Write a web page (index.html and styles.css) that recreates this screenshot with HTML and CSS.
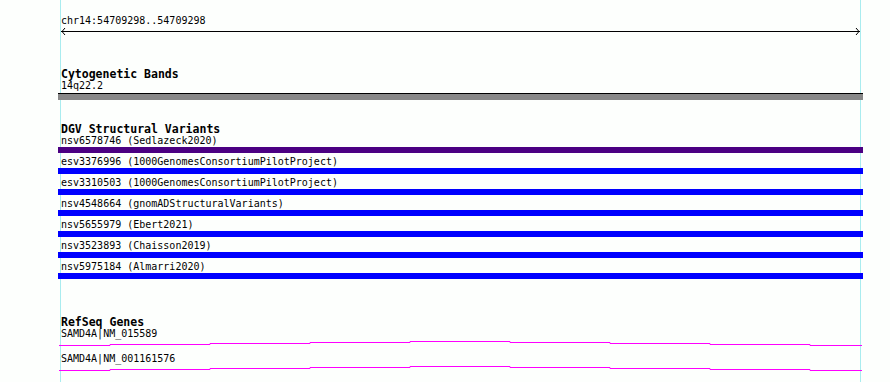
FILE: index.html
```html
<!DOCTYPE html>
<html lang="en">
  <head>
    <meta charset="UTF-8" />
    <meta name="viewport" content="width=device-width, initial-scale=1.0" />
    <title>Track view</title>
    <link rel="stylesheet" href="styles.css">
  </head>
  <body>
    <div class="l-view">
      <div class="c-ruler">
        <div class="c-label">chr14:54709298..54709298</div>
        <svg class="c-ruler__arrow" width="799" height="9" viewBox="0 0 799 9">
          <line x1="0" y1="4.5" x2="799" y2="4.5" stroke="#000" stroke-width="1" />
          <polyline points="4,1 1,4.5 4,8" fill="none" stroke="#000" stroke-width="1" />
          <polyline points="795,1 798,4.5 795,8" fill="none" stroke="#000" stroke-width="1" />
        </svg>
      </div>

      <div class="c-track c-track--cyto">
        <h3 class="c-track__title">Cytogenetic Bands</h3>
        <div class="c-label">14q22.2</div>
        <div class="c-band"></div>
      </div>

      <div class="c-track c-track--dgv">
        <h3 class="c-track__title">DGV Structural Variants</h3>
        <div class="c-sv">
          <div class="c-label">nsv6578746 (Sedlazeck2020)</div>
          <div class="c-sv__bar c-sv__bar--loss"></div>
        </div>
        <div class="c-sv">
          <div class="c-label">esv3376996 (1000GenomesConsortiumPilotProject)</div>
          <div class="c-sv__bar"></div>
        </div>
        <div class="c-sv">
          <div class="c-label">esv3310503 (1000GenomesConsortiumPilotProject)</div>
          <div class="c-sv__bar"></div>
        </div>
        <div class="c-sv">
          <div class="c-label">nsv4548664 (gnomADStructuralVariants)</div>
          <div class="c-sv__bar"></div>
        </div>
        <div class="c-sv">
          <div class="c-label">nsv5655979 (Ebert2021)</div>
          <div class="c-sv__bar"></div>
        </div>
        <div class="c-sv">
          <div class="c-label">nsv3523893 (Chaisson2019)</div>
          <div class="c-sv__bar"></div>
        </div>
        <div class="c-sv">
          <div class="c-label">nsv5975184 (Almarri2020)</div>
          <div class="c-sv__bar"></div>
        </div>
      </div>

      <div class="c-track c-track--genes">
        <h3 class="c-track__title">RefSeq Genes</h3>
        <div class="c-gene">
          <div class="c-label">SAMD4A|NM_015589</div>
          <svg class="c-gene__line" width="803" height="13" viewBox="0 0 803 13">
            <polyline points="0,5.5 51,5.5 51,4.5 151,4.5 151,3.5 251,3.5 251,2.5 351,2.5 351,1.5 451,1.5 451,2.5 551,2.5 551,3.5 651,3.5 651,4.5 751,4.5 751,5.5 803,5.5" fill="none" stroke="#f0f" stroke-width="1" />
          </svg>
        </div>
        <div class="c-gene">
          <div class="c-label">SAMD4A|NM_001161576</div>
          <svg class="c-gene__line" width="803" height="13" viewBox="0 0 803 13">
            <polyline points="0,5.5 51,5.5 51,4.5 151,4.5 151,3.5 251,3.5 251,2.5 351,2.5 351,1.5 451,1.5 451,2.5 551,2.5 551,3.5 651,3.5 651,4.5 751,4.5 751,5.5 803,5.5" fill="none" stroke="#f0f" stroke-width="1" />
          </svg>
        </div>
      </div>
    </div>
  </body>
</html>
```

FILE: styles.css
```css
:root {
  --bg: #fdfffd;
  --guide: #a9ecef;
  --ink: #000000;
  --band: #888888;
  --sv-loss: #4b0082;
  --sv: #0000ff;
}

html,
body {
  height: 100%;
  overflow: hidden;
}

body {
  margin: 0;
  background: var(--bg);
  color: var(--ink);
  font-family: "DejaVu Sans Mono", "Liberation Mono", monospace;
  font-size: 10px;
  line-height: 12px;
}

.l-view {
  margin-left: 60px;
  width: 799px;
  height: 382px;
  border-left: 1px solid var(--guide);
  border-right: 1px solid var(--guide);
}

.c-label {
  height: 12px;
  white-space: nowrap;
}

.c-ruler {
  padding-top: 15px;
}

.c-ruler__arrow {
  display: block;
}

.c-track__title {
  height: 12px;
  margin: 0;
  font-size: 11.5px;
  font-weight: bold;
  line-height: 12px;
}

.c-track--cyto {
  margin-top: 32px;
}

.c-band {
  margin: 1px -3px 0;
  height: 6px;
  border-top: 1px solid var(--ink);
  background: var(--band);
}

.c-track--dgv {
  margin-top: 23px;
}

.c-sv + .c-sv {
  padding-top: 3px;
}

.c-sv__bar {
  margin: 0 -3px;
  height: 6px;
  background: var(--sv);
}

.c-sv__bar--loss {
  background: var(--sv-loss);
}

.c-track--genes {
  margin-top: 37px;
}

.c-gene__line {
  display: block;
  margin-left: -2px;
}
```
